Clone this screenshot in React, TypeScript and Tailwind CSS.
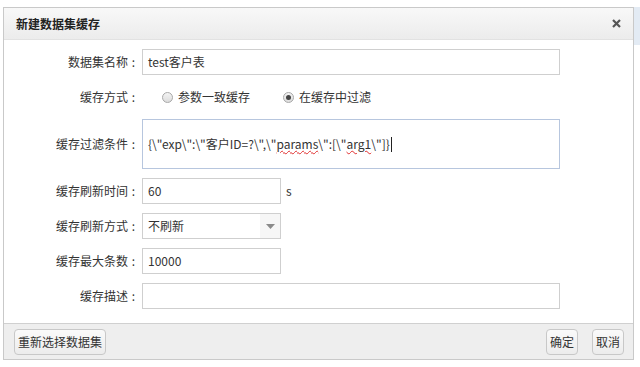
export default function App() {
  const font = { fontFamily: '"Noto Sans CJK SC", "Liberation Sans", sans-serif' }

  const Label = ({ children }: { children: string }) => (
    <div className="flex w-[137px] shrink-0 justify-end pr-[2px] text-[12px] text-[#333]">
      <span>{children}</span>
      <span className="w-[11px] text-center">:</span>
    </div>
  )

  const Radio = ({ checked, label }: { checked?: boolean; label: string }) => (
    <label className="flex items-center gap-[5px] text-[12px] text-[#333]">
      <span className="flex h-[11px] w-[11px] items-center justify-center rounded-full border border-[#a8a8a8] bg-gradient-to-b from-[#f4f4f4] to-[#dcdcdc]">
        {checked && <span className="h-[5px] w-[5px] rounded-full bg-[#444]" />}
      </span>
      {label}
    </label>
  )

  const Button = ({ children }: { children: string }) => (
    <button className="h-[26px] rounded-[4px] border border-[#c8c8c8] bg-gradient-to-b from-[#fafafa] to-[#ececec] px-[3px] text-[12px] text-[#333]">
      {children}
    </button>
  )

  return (
    <div className="h-[367px] w-[640px] overflow-hidden bg-white pl-[3px] pt-[7px]" style={font}>
      <div className="flex items-start">
        <div className="flex h-[353px] w-[632px] flex-col border border-[#c9c9c9] bg-white">
          <div className="flex h-[32px] items-center justify-between border-b border-[#e2e2e2] bg-gradient-to-b from-[#f8f8f8] to-[#ececec] pl-[12px] pr-[12px]">
            <span className="text-[12px] font-bold text-[#222]">新建数据集缓存</span>
            <svg width="9" height="9" viewBox="0 0 9 9">
              <path d="M1 1 L8 8 M8 1 L1 8" stroke="#555" strokeWidth="2.2" />
            </svg>
          </div>

          <div className="flex flex-1 flex-col gap-[9px] pt-[9px]">
            <div className="flex h-[26px] items-center">
              <Label>数据集名称</Label>
              <div className="ml-[1px] flex h-[26px] w-[418px] items-center border border-[#cfcfcf] px-[5px] text-[12px] text-[#333]">
                test客户表
              </div>
            </div>

            <div className="flex h-[26px] items-center">
              <Label>缓存方式</Label>
              <div className="ml-[21px] flex items-center gap-[33px]">
                <Radio label="参数一致缓存" />
                <Radio checked label="在缓存中过滤" />
              </div>
            </div>

            <div className="flex h-[50px] items-center">
              <Label>缓存过滤条件</Label>
              <div className="ml-[1px] flex h-[50px] w-[418px] items-center border border-[#b7c6de] px-[5px] text-[12px] text-[#333]">
                <span>
                  {'{\\"exp\\":\\"客户ID=?\\",\\"'}
                  <span className="underline decoration-[#e03030] decoration-wavy decoration-[1px]">params</span>
                  {'\\":[\\"'}
                  <span className="underline decoration-[#e03030] decoration-wavy decoration-[1px]">arg1</span>
                  {'\\"]}'}
                </span>
                <span className="ml-[1px] h-[15px] w-[1px] bg-[#222]" />
              </div>
            </div>

            <div className="flex h-[26px] items-center">
              <Label>缓存刷新时间</Label>
              <div className="ml-[1px] flex h-[26px] w-[139px] items-center border border-[#cfcfcf] px-[5px] text-[12px] text-[#333]">
                60
              </div>
              <span className="ml-[5px] text-[12px] text-[#333]">s</span>
            </div>

            <div className="flex h-[26px] items-center">
              <Label>缓存刷新方式</Label>
              <div className="ml-[1px] flex h-[26px] w-[139px] items-center border border-[#cfcfcf] text-[12px] text-[#333]">
                <span className="flex-1 pl-[5px]">不刷新</span>
                <span className="flex h-full w-[20px] items-center justify-center bg-[#f6f6f6]">
                  <svg width="9" height="5" viewBox="0 0 9 5">
                    <path d="M0 0 L9 0 L4.5 5 Z" fill="#8a8a8a" />
                  </svg>
                </span>
              </div>
            </div>

            <div className="flex h-[26px] items-center">
              <Label>缓存最大条数</Label>
              <div className="ml-[1px] flex h-[26px] w-[139px] items-center border border-[#cfcfcf] px-[5px] text-[12px] text-[#333]">
                10000
              </div>
            </div>

            <div className="flex h-[26px] items-center">
              <Label>缓存描述</Label>
              <div className="ml-[1px] h-[26px] w-[418px] border border-[#cfcfcf]" />
            </div>
          </div>

          <div className="flex h-[36px] items-center justify-between border-t border-[#d0d0d0] bg-[#eeeeee] pl-[10px] pr-[9px]">
            <Button>重新选择数据集</Button>
            <div className="flex gap-[14px]">
              <Button>确定</Button>
              <Button>取消</Button>
            </div>
          </div>
        </div>
        <div className="h-[38px] w-[6px] bg-[#e3ebf4]" />
      </div>
    </div>
  )
}
